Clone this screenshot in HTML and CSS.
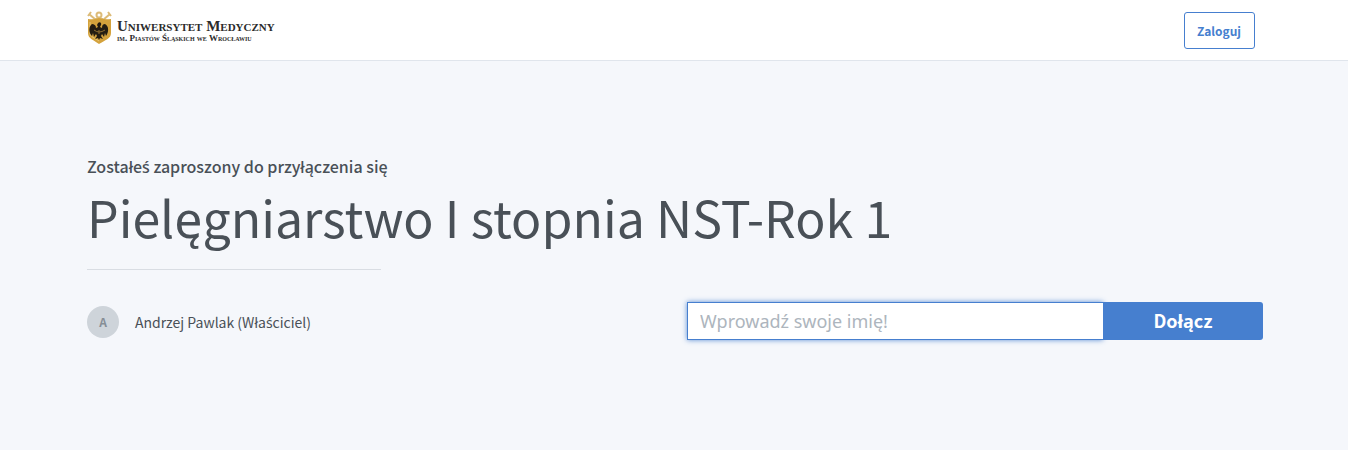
FILE: index.html
```html
<!DOCTYPE html>
<html lang="pl">
<head>
  <meta charset="UTF-8">
  <meta name="viewport" content="width=device-width, initial-scale=1">
  <title>Pielęgniarstwo I stopnia NST-Rok 1</title>
  <link rel="stylesheet" href="styles.css">
</head>
<body>
  <header class="header">
    <div class="container header-row">
      <a class="brand" href="/">
        <svg class="crest" viewBox="0 0 25 34" aria-hidden="true">
          <g stroke="#dcbb78" stroke-width="2" fill="none">
            <path d="M2 3l7 6M4 1L1 5M23 3l-7 6M21 1l3 4"/>
            <circle cx="12" cy="4" r="2.5"/>
            <path d="M8 8h8"/>
          </g>
          <path d="M1 8q6 1 11-1q6 2 12 1v14c0 6-6 7-12 11C7 29 1 28 1 22z" fill="#d4a23c"/>
          <path d="M3 11v11c0 4 5 5 9 8" fill="none" stroke="#e6c577" stroke-width="1"/>
          <path d="M11 12c2-2 4 0 3 2l-1 2 2 1c0-3 1-4 3-4 4 2 4 8 1 12l-1-3-1 4-2-3-1 2 2 3-3-1-1 2-1-2-3 1 2-3-1-2-2 3-1-4-1 3c-4-4-3-10 0-12 2 0 4 1 4 4l2-1-1-2z" fill="#241d12"/>
          <path d="M7 19q5 4 11 0M12 19v4" fill="none" stroke="#8e6d30" stroke-width="1"/>
        </svg>
        <span class="brand-text">
          <span class="brand-name">Uniwersytet Medyczny</span>
          <span class="brand-sub">im. Piastów Śląskich we Wrocławiu</span>
        </span>
      </a>
      <a class="btn-login" href="/signin">Zaloguj</a>
    </div>
  </header>

  <main class="container room">
    <h4 class="invited">Zostałe<span class="accent">ś</span> zaproszony do przyłączenia się</h4>
    <h1 class="room-name">Pielęgniarstwo I stopnia NST-Rok 1</h1>
    <hr class="divider">
    <div class="room-row">
      <div class="owner">
        <span class="avatar">A</span>
        <h5 class="owner-name">Andrzej Pawlak (Wła<span class="accent">ś</span>ciciel)</h5>
      </div>
      <form class="join-form">
        <input class="join-input" type="text" name="join_name" placeholder="Wprowadź swoje imię!" aria-label="Wprowadź swoje imię!">
        <button class="btn-join" type="submit">Dołącz</button>
      </form>
    </div>
  </main>
</body>
</html>
```
FILE: styles.css
```css
* { box-sizing: border-box; }
body {
  margin: 0;
  min-height: 100vh;
  background: #f5f7fb;
  color: #495057;
  font-family: "Noto Sans CJK SC", "Noto Sans", sans-serif;
  font-size: 14px;
}
.container {
  max-width: 1200px;
  margin: 0 auto;
  padding: 0 11px 0 13px;
}
.header {
  background: #fff;
  border-bottom: 1px solid #e0e5ec;
}
.header-row {
  display: flex;
  align-items: center;
  justify-content: space-between;
  height: 60px;
}
.brand {
  display: flex;
  align-items: center;
  gap: 5px;
  margin-bottom: 4px;
  color: #2b2b2b;
  text-decoration: none;
}
.crest {
  width: 25px;
  height: 34px;
}
.brand-text {
  display: flex;
  flex-direction: column;
  padding-top: 6px;
  font-family: "Liberation Serif", serif;
  font-weight: bold;
  font-variant: small-caps;
  white-space: nowrap;
}
.brand-name {
  font-size: 15px;
  line-height: 14px;
}
.brand-sub {
  font-size: 9px;
  line-height: 10px;
}
.btn-login {
  margin-right: 8px;
  padding: 8px 13px 8px 12px;
  border: 1px solid #467fcf;
  border-radius: 3px;
  color: #467fcf;
  font-size: 12px;
  font-weight: bold;
  line-height: 19px;
  text-decoration: none;
}
.room { padding-top: 95px; }
.invited {
  margin: 0 0 5px;
  font-size: 16px;
  font-weight: 500;
  line-height: 20px;
}
/* the CJK face has no precomposed acute s */
.accent {
  font-family: "Noto Sans", sans-serif;
}
.room-name {
  margin: 0;
  font-size: 50px;
  font-weight: 400;
  line-height: 68px;
}
.divider {
  width: 25%;
  margin: 19px 0 32px;
  border: 0;
  border-top: 1px solid #d9dde3;
}
.room-row {
  display: grid;
  grid-template-columns: 1fr 1fr;
  gap: 24px;
  align-items: center;
}
.owner {
  display: flex;
  align-items: center;
  gap: 16px;
  padding-top: 2px;
}
.avatar {
  width: 32px;
  height: 32px;
  border-radius: 50%;
  background: #ced4da;
  color: #868e96;
  font-size: 12px;
  font-weight: bold;
  line-height: 32px;
  text-align: center;
}
.owner-name {
  margin: 0;
  font-size: 14px;
  font-weight: 400;
  line-height: 20px;
}
.join-form { display: flex; }
.join-input {
  flex: 1;
  min-width: 0;
  height: 38px;
  padding: 0 12px;
  border: 1px solid #467fcf;
  border-right: 0;
  border-radius: 0;
  background: #fff;
  box-shadow: 0 0 5px rgba(70, 127, 207, 0.9);
  color: #495057;
  font-family: "Noto Sans", sans-serif;
  font-size: 18px;
  outline: 0;
}
.join-input::placeholder { color: #adb5bd; }
.btn-join {
  width: 160px;
  padding: 0 0 2px;
  border: 0;
  border-radius: 0 3px 3px 0;
  background: #467fcf;
  color: #fff;
  font-family: inherit;
  font-size: 18px;
  font-weight: bold;
}
```
